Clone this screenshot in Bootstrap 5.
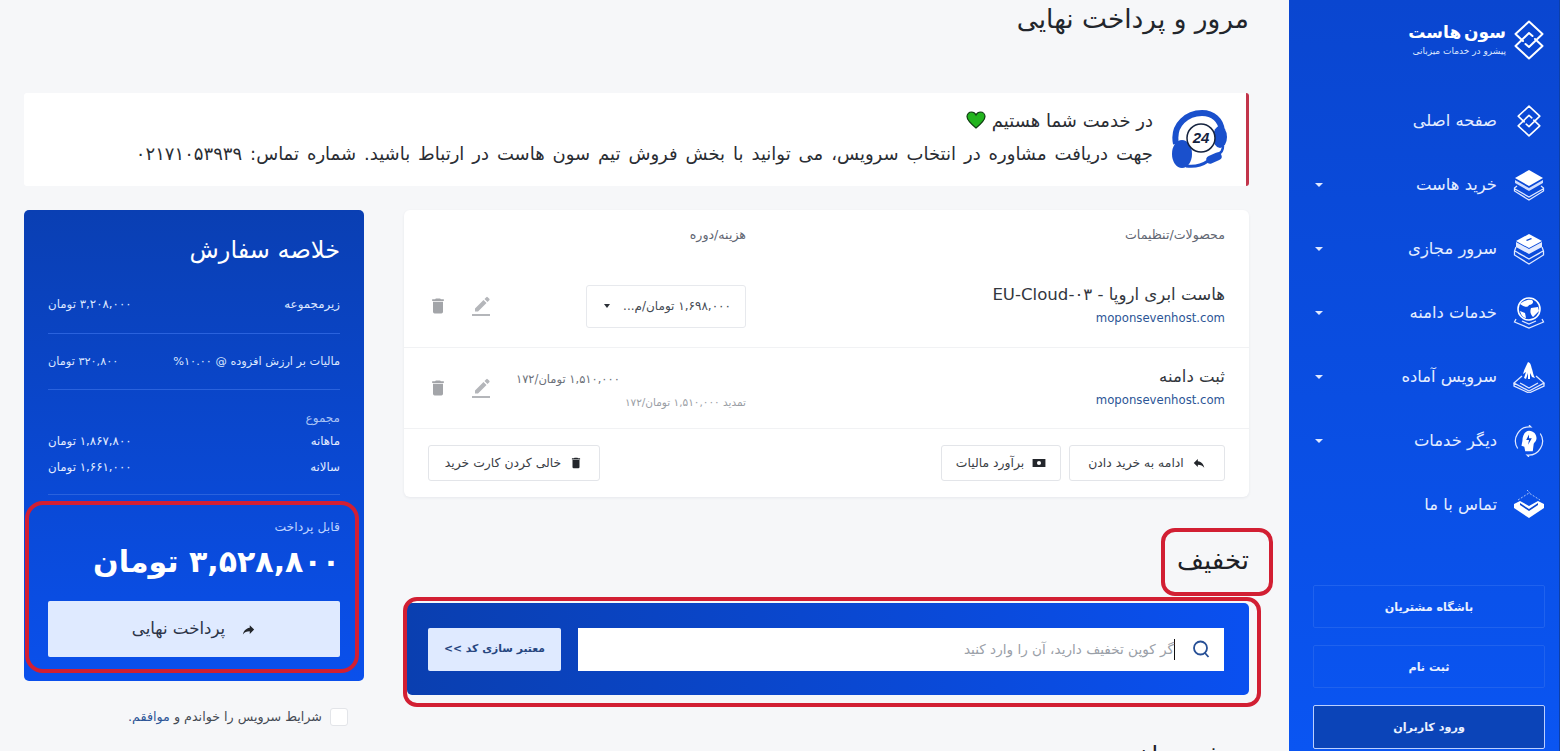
<!DOCTYPE html>
<html lang="fa" dir="rtl">
<head>
  <meta charset="UTF-8">
  <title>مرور و پرداخت نهایی</title>
  <meta name="viewport" content="width=device-width, initial-scale=1">
  <link rel="stylesheet" href="https://cdn.jsdelivr.net/npm/bootstrap@5.3.0/dist/css/bootstrap.min.css">
  <style>
    html, body { height: 100%; overflow: hidden; }
    body { font-family: "DejaVu Sans", "Noto Sans", sans-serif; background: #f6f7f9; color: #2b2f36; font-size: 12px; }
    .shell { height: 751px; }
    /* sidebar */
    .side { width: 271px; flex: none; background: linear-gradient(180deg, #0a46d0 0%, #0a55f2 100%); border-right: 1px solid #0d3fa8; color: #e4edff; padding: 0 14px 0 24px; height: 751px; }
    .brand { height: 80px; }
    .brand-copy { margin-right: 7px; }
    .brand-name { font-size: 17px; font-weight: 700; color: #fff; line-height: 20px; word-spacing: -3px; white-space: nowrap; }
    .brand-sub { font-size: 9px; color: #dfe8ff; line-height: 14px; margin-top: 2px; white-space: nowrap; }
    .side-menu { margin-top: 9px; height: 448px; }
    .side-item { height: 64px; color: #e4edff; text-decoration: none; font-size: 16.4px; font-weight: 500; }
    .side-ico { width: 32px; height: 32px; flex: none; margin-left: 16px; }
    .side-caret { margin-right: auto; margin-left: 2px; width: 0; height: 0; border-left: 4px solid transparent; border-right: 4px solid transparent; border-top: 4px solid #dfe8ff; }
    .side-btns { margin-top: 48px; gap: 17px; }
    .side-btn { height: 43px; border: 1px solid #1f62ee; color: #eaf1ff; font-size: 11.2px; font-weight: 700; border-radius: 2px; padding-top: 3px; }
    .side-btn-on { height: 44px; background: #0b44b8; border-color: #bcd0ff; }
    /* main */
    .main-pane { padding: 0 40px 0 24px; min-width: 0; }
    .page-title { font-size: 26.4px; font-weight: 400; color: #22262c; height: 93px; margin: 0; padding-top: 2px; line-height: 34px; }
    .help-box { height: 93px; background: #fff; border-right: 3px solid #c2344a; border-radius: 3px; padding-right: 18px; }
    .help-text { margin-right: 17px; font-size: 18px; line-height: 33px; color: #2a2d33; padding-bottom: 6px; }
    .help-first { height: 33px; }
    .help-second { word-spacing: 2.2px; white-space: nowrap; }
    .heart { vertical-align: -2px; }
    .page-row { margin-top: 24px; gap: 40px; }
    /* cart */
    .cart-col { width: 845px; flex: none; }
    .cart-box { height: 287px; border: 0; border-radius: 6px; box-shadow: 0 1px 3px rgba(30,40,70,.07); }
    .cart-line { padding: 0 24px; }
    .cart-head { height: 55px; font-size: 12.6px; color: #5f6672; padding-bottom: 4px; }
    .cell-prod { width: 479px; flex: none; }
    .cell-price { width: 230px; flex: none; }
    .cart-row { border-bottom: 1px solid #f1f2f4; }
    .cart-row-a { height: 83px; }
    .cart-row-b { height: 81px; }
    .prod-name { font-size: 16.6px; color: #33373e; line-height: 24px; margin-top: -3px; margin-bottom: 2px; }
    .prod-dom { font-size: 11.7px; color: #2c5596; line-height: 18px; }
    .cycle-box { width: 160px; height: 43px; border: 1px solid #e7e9ed; border-radius: 3px; font-size: 12px; color: #444a53; padding: 0 14px 0 17px; }
    .cycle-caret { width: 0; height: 0; border-left: 3.5px solid transparent; border-right: 3.5px solid transparent; border-top: 4px solid #2b2f36; }
    .price-a { font-size: 11.5px; color: #6b7079; text-align: left; line-height: 20px; white-space: nowrap; margin-top: 2px; }
    .price-b { font-size: 10.5px; color: #9a9ea5; line-height: 16px; margin-top: 5px; white-space: nowrap; }
    .row-acts { gap: 21px; }
    .foot-line { height: 68px; padding: 0 24px; }
    .plain-btn { height: 36px; background: #fff; border: 1px solid #e3e5e9; border-radius: 3px; font-size: 12.4px; color: #3a3e45; padding: 0; white-space: nowrap; }
    .btn-shop { width: 156px; }
    .btn-tax { width: 120px; }
    .btn-empty { width: 172px; }
    /* discount */
    .disc-title { position: relative; font-size: 26px; font-weight: 400; color: #1d2025; height: 106px; padding-top: 46px; line-height: 34px; margin: 0; }
    .mark-red { position: absolute; border: 4px solid #d21f33; border-radius: 14px; pointer-events: none; }
    .mark-title { top: 31px; right: -24px; width: 112px; height: 68px; }
    .disc-wrap { position: relative; }
    .disc-band { height: 92px; margin-right: 0; margin-left: 3px; border-radius: 5px; background: linear-gradient(90deg, #0a3fb0 0%, #0a50f0 100%); padding: 0 25px 0 21px; }
    .mark-disc { top: -6px; right: -12px; width: 858px; height: 110px; }
    .disc-input { width: 646px; height: 43px; background: #fff; flex: none; color: #9aa0a8; font-size: 13.6px; padding-right: 14px; }
    .disc-caret { width: 1px; height: 21px; background: #111; margin: 0 17px 0 0; }
    .disc-btn { width: 133px; height: 43px; padding: 0; background: #dfeaff; border: 0; border-radius: 2px; color: #26467f; font-size: 10.8px; font-weight: 700; }
    .peek-title { font-size: 24px; color: #1d2025; line-height: 30px; margin-top: 45px; }
    /* summary */
    .sum-col { width: 340px; flex: none; }
    .sum-box { position: relative; height: 471px; border: 0; border-radius: 5px; color: #d9e5ff; background: linear-gradient(180deg, #0a3fb3 0%, #0a50ec 100%); padding: 0 24px; }
    .sum-title { font-size: 24px; font-weight: 400; color: #fff; margin: 0; height: 70px; padding-top: 24px; line-height: 32px; }
    .sum-line { font-size: 11.8px; height: 54px; padding-top: 14px; line-height: 20px; border-bottom: 1px solid #2a62dd; color: #dce7ff; }
    .sum-line-b { height: 56px; padding-top: 18px; font-size: 11.3px; }
    .sum-cap { font-size: 12px; color: #a9c3f5; margin-top: 18px; line-height: 20px; }
    .sum-sub { font-size: 11.8px; line-height: 26px; color: #e3ecff; }
    .sum-end { border-top: 1px solid #2a62dd; margin-top: 14px; padding-top: 22px; }
    .pay-cap { font-size: 12.4px; color: #bcd2ff; line-height: 20px; }
    .pay-sum { font-size: 30px; font-weight: 700; color: #fff; line-height: 44px; margin-top: 3px; white-space: nowrap; }
    .pay-btn { width: 100%; height: 56px; margin-top: 17px; background: #dfeaff; border: 0; border-radius: 2px; color: #2b3447; font-size: 16.6px; padding: 0; }
    .mark-sum { top: 291px; right: 5px; left: 1px; height: 172px; border-radius: 18px; }
    .terms { margin-top: 26px; font-size: 12.7px; color: #444a53; padding-right: 16px; }
    .terms-box { width: 18px; height: 18px; background: #fff; border: 1px solid #e3e5e9; border-radius: 3px; flex: none; }
    .terms a { color: #2c5596; text-decoration: none; }
  </style>
</head>
<body>
  <svg width="0" height="0" class="d-none">
    <symbol id="ico-logo" viewBox="0 0 32 40">
      <path d="M10 21 2.500 14 16 1.500 29.500 14 16 27 12.500 24M22 19 29.500 26 16 38.500 2.500 26 16 13 19.500 16" fill="none" stroke="currentColor" stroke-width="2" stroke-linejoin="round" stroke-linecap="round"/>
    </symbol>
    <symbol id="ico-stack" viewBox="0 0 32 32">
      <path d="M16 1 30 9 16 17 2 9Z" fill="#fff"/>
      <path d="M2 11v3l14 8 14-8v-3L16 19Z" fill="#cfdcff"/>
      <path d="M4 17 1.500 19v3L16 31l14.500-9v-3L28 17M2 20l14 8 14-8" fill="none" stroke="#dfe8ff" stroke-width="1.300"/>
    </symbol>
    <symbol id="ico-server" viewBox="0 0 32 32">
      <path d="M16 1 29 8 16 15 3 8Z" fill="#fff"/>
      <path d="M13 7l5-2 1 1-5 2Z" fill="#0a46d0"/>
      <path d="M3 9v5l13 7 13-7V9l-13 7Z" fill="#e2eaff"/>
      <path d="M3 14 1.500 18v4L16 31l14.500-9v-4L29 14M2 18l14 8 14-8M5 20l11 6M27 20l-11 6" fill="none" stroke="#dfe8ff" stroke-width="1.300"/>
    </symbol>
    <symbol id="ico-globe" viewBox="0 0 32 32">
      <circle cx="16" cy="12" r="11" fill="none" stroke="#fff" stroke-width="1.600"/>
      <path d="M7 7c4-3 7-5 12-4 3 3-1 5-3 5-1 3-5 2-9-1ZM18 11l7-1 1 4-6 6c-3-3-3-6-2-9ZM7 14l5 2 1 5c-3 0-5-3-6-7Z" fill="#fff"/>
      <path d="M3 22 1.500 25 16 31l14.500-6L29 22M9 24l7 3 7-3" fill="none" stroke="#dfe8ff" stroke-width="1.300"/>
    </symbol>
    <symbol id="ico-hand" viewBox="0 0 32 32">
      <path d="M15 1c3 1 3 4 4 7 1 3 1 6 3 9l-3-1-2-4v6h-2v-6l-2 6-2-1 2-6-3 2c1-4 3-8 5-12Z" fill="#fff"/>
      <path d="M9 15 1 22l15 8 15-8-8-7M1 22v3l15 7 15-7v-3M7 22l9 5 9-5" fill="none" stroke="#dfe8ff" stroke-width="1.300"/>
    </symbol>
    <symbol id="ico-head" viewBox="0 0 34 34">
      <path d="M5 25A15 15 0 0 1 19 2l-2-2M29 9a15 15 0 0 1-14 23l2 2" fill="none" stroke="#dfe8ff" stroke-width="1.300"/>
      <path d="M17 6c5 0 8 4 8 8 0 3-2 4-3 6l-1 8h-8l-1-5-3-1 1-5c0-6 3-11 7-11Z" fill="#fff"/>
      <path d="M17 10l-3 6h3l-1 5 4-7h-3Z" fill="#0a46d0"/>
    </symbol>
    <symbol id="ico-box" viewBox="0 0 32 32">
      <path d="M1 15l6-3 9 5 9-5 6 3v4L16 29 1 19Z" fill="#fff"/>
      <path d="M16 20 7 14v2l9 6 9-6v-2Z" fill="#0a46d0"/>
      <path d="M5 11 16 4l11 7M14 1l3 3" fill="none" stroke="#a9c3f5" stroke-width="1" stroke-dasharray="2 1.500"/>
    </symbol>
    <symbol id="ico-trash" viewBox="0 0 24 24"><path d="M6 19a2 2 0 0 0 2 2h8a2 2 0 0 0 2-2V7H6ZM19 4h-3.500l-1-1h-5l-1 1H5v2h14Z"/></symbol>
    <symbol id="ico-edit" viewBox="0 0 24 24"><path d="M3 20h18v2H3ZM6 14.500l8.500-8.500 3 3L9 17.500H6ZM15.500 5l1.800-1.800a1 1 0 0 1 1.400 0l1.600 1.600a1 1 0 0 1 0 1.400L18.500 8Z"/></symbol>
    <symbol id="ico-reply" viewBox="0 0 24 24"><path d="M10 9V5l-7 7 7 7v-4.100c5 0 8.500 1.600 11 5.100-1-5-4-10-11-11Z"/></symbol>
    <symbol id="ico-share" viewBox="0 0 24 24"><path d="M14 9V5l7 7-7 7v-4.100c-5 0-8.500 1.600-11 5.100 1-5 4-10 11-11Z"/></symbol>
    <symbol id="ico-money" viewBox="0 0 24 24"><path fill-rule="evenodd" d="M1 5h22v14H1ZM12 8.500a3.500 3.500 0 1 0 0 7 3.500 3.500 0 0 0 0-7Z"/></symbol>
  </svg>

  <div class="shell d-flex">
    <!-- sidebar -->
    <aside class="side d-flex flex-column">
      <div class="brand d-flex align-items-center">
        <svg class="text-white flex-shrink-0" width="32" height="40"><use href="#ico-logo"/></svg>
        <div class="brand-copy">
          <div class="brand-name">سون هاست</div>
          <div class="brand-sub">پیشرو در خدمات میزبانی</div>
        </div>
      </div>
      <nav class="side-menu d-flex flex-column">
        <a class="side-item d-flex align-items-center" href="#"><svg class="side-ico text-white"><use href="#ico-logo"/></svg>صفحه اصلی</a>
        <a class="side-item d-flex align-items-center" href="#"><svg class="side-ico"><use href="#ico-stack"/></svg>خرید هاست<span class="side-caret"></span></a>
        <a class="side-item d-flex align-items-center" href="#"><svg class="side-ico"><use href="#ico-server"/></svg>سرور مجازی<span class="side-caret"></span></a>
        <a class="side-item d-flex align-items-center" href="#"><svg class="side-ico"><use href="#ico-globe"/></svg>خدمات دامنه<span class="side-caret"></span></a>
        <a class="side-item d-flex align-items-center" href="#"><svg class="side-ico"><use href="#ico-hand"/></svg>سرویس آماده<span class="side-caret"></span></a>
        <a class="side-item d-flex align-items-center" href="#"><svg class="side-ico"><use href="#ico-head"/></svg>دیگر خدمات<span class="side-caret"></span></a>
        <a class="side-item d-flex align-items-center" href="#"><svg class="side-ico"><use href="#ico-box"/></svg>تماس با ما</a>
      </nav>
      <div class="side-btns d-flex flex-column">
        <div class="side-btn d-flex align-items-center justify-content-center">باشگاه مشتریان</div>
        <div class="side-btn d-flex align-items-center justify-content-center">ثبت نام</div>
        <div class="side-btn side-btn-on d-flex align-items-center justify-content-center">ورود کاربران</div>
      </div>
    </aside>

    <!-- main -->
    <main class="main-pane flex-grow-1">
      <h1 class="page-title">مرور و پرداخت نهایی</h1>

      <div class="help-box d-flex align-items-center">
        <svg class="flex-shrink-0" width="58" height="60" viewBox="0 0 58 60">
          <path d="M6 34C2 14 18 3 32 3c11 0 19 7 20 18" fill="none" stroke="#1a50cc" stroke-width="6"/>
          <ellipse cx="12" cy="44" rx="10" ry="14" fill="#1a50cc"/>
          <ellipse cx="50" cy="27" rx="7" ry="11" fill="#1a50cc"/>
          <circle cx="31" cy="28" r="14" fill="#fff" stroke="#15233f" stroke-width="1.500"/>
          <text x="31" y="33" text-anchor="middle" font-family="Liberation Sans, sans-serif" font-size="15" font-weight="700" font-style="italic" fill="#15233f">24</text>
          <rect x="36" y="44" width="16" height="8" rx="4" transform="rotate(-24 44 48)" fill="#1a50cc"/>
          <path d="M16 56c7 1 15 0 22-5" fill="none" stroke="#1a50cc" stroke-width="3"/>
          <path d="M53 36c0 4-2 7-5 8" fill="none" stroke="#1a50cc" stroke-width="2.500"/>
        </svg>
        <div class="help-text">
          <div class="help-first">در خدمت شما هستیم
            <svg class="heart" width="20" height="18" viewBox="0 0 20 18"><path d="M10 17C4 12 1 9 1 5.500 1 3 3 1 5.500 1 7.500 1 9 2 10 4c1-2 2.500-3 4.500-3C17 1 19 3 19 5.500 19 9 16 12 10 17Z" fill="#22b41e" stroke="#0e3d12" stroke-width="1.200"/></svg>
          </div>
          <div class="help-second">جهت دریافت مشاوره در انتخاب سرویس، می توانید با بخش فروش تیم سون هاست در ارتباط باشید. شماره تماس: ۰۲۱۷۱۰۵۳۹۳۹</div>
        </div>
      </div>

      <div class="page-row d-flex">
        <!-- cart -->
        <div class="cart-col">
          <div class="card cart-box">
            <div class="cart-line cart-head d-flex align-items-center">
              <div class="cell-prod">محصولات/تنظیمات</div>
              <div class="cell-price">هزینه/دوره</div>
            </div>
            <div class="cart-line cart-row cart-row-a d-flex align-items-center">
              <div class="cell-prod">
                <div class="prod-name">هاست ابری اروپا - EU-Cloud-۰۳</div>
                <div class="prod-dom">moponsevenhost.com</div>
              </div>
              <div class="cell-price">
                <div class="cycle-box d-flex align-items-center justify-content-between">
                  <span>۱,۶۹۸,۰۰۰ تومان/م...</span><span class="cycle-caret"></span>
                </div>
              </div>
              <div class="row-acts d-flex flex-grow-1 justify-content-end align-items-center">
                <svg width="24" height="24" fill="#b4b6ba"><use href="#ico-edit"/></svg>
                <svg width="20" height="24" fill="#a3a5a9"><use href="#ico-trash"/></svg>
              </div>
            </div>
            <div class="cart-line cart-row cart-row-b d-flex align-items-center">
              <div class="cell-prod">
                <div class="prod-name">ثبت دامنه</div>
                <div class="prod-dom">moponsevenhost.com</div>
              </div>
              <div class="cell-price">
                <div class="price-a">۱,۵۱۰,۰۰۰ تومان/۱۷۲</div>
                <div class="price-b">تمدید ۱,۵۱۰,۰۰۰ تومان/۱۷۲</div>
              </div>
              <div class="row-acts d-flex flex-grow-1 justify-content-end align-items-center">
                <svg width="24" height="24" fill="#b4b6ba"><use href="#ico-edit"/></svg>
                <svg width="20" height="24" fill="#a3a5a9"><use href="#ico-trash"/></svg>
              </div>
            </div>
            <div class="foot-line d-flex align-items-center">
              <button type="button" class="btn plain-btn btn-shop d-flex align-items-center justify-content-center gap-2"><svg width="14" height="14" fill="#23262b"><use href="#ico-reply"/></svg>ادامه به خرید دادن</button>
              <button type="button" class="btn plain-btn btn-tax d-flex align-items-center justify-content-center gap-2 me-2"><svg width="14" height="14" fill="#23262b"><use href="#ico-money"/></svg>برآورد مالیات</button>
              <button type="button" class="btn plain-btn btn-empty d-flex align-items-center justify-content-center gap-2 me-auto"><svg width="14" height="14" fill="#23262b"><use href="#ico-trash"/></svg>خالی کردن کارت خرید</button>
            </div>
          </div>

          <h2 class="disc-title">تخفیف<span class="mark-red mark-title"></span></h2>
          <div class="disc-wrap">
            <div class="disc-band d-flex align-items-center justify-content-between">
              <div class="disc-input d-flex align-items-center">
                <svg width="18" height="18" viewBox="0 0 18 18" fill="none" stroke="#264f96" stroke-width="1.800"><circle cx="8.500" cy="8" r="6.500"/><path d="M13 13l3.500 4"/></svg>
                <span class="disc-caret"></span>
                <span>گر کوپن تخفیف دارید، آن را وارد کنید</span>
              </div>
              <button type="button" class="btn disc-btn">معتبر سازی کد &gt;&gt;</button>
            </div>
            <span class="mark-red mark-disc"></span>
          </div>
          <div class="peek-title">روش پرداخت</div>
        </div>

        <!-- summary -->
        <div class="sum-col">
          <div class="card sum-box">
            <h2 class="sum-title">خلاصه سفارش</h2>
            <div class="sum-line d-flex justify-content-between"><span>زیرمجموعه</span><span>۳,۲۰۸,۰۰۰ تومان</span></div>
            <div class="sum-line sum-line-b d-flex justify-content-between"><span>مالیات بر ارزش افزوده @ ۱۰.۰۰%</span><span>۳۲۰,۸۰۰ تومان</span></div>
            <div class="sum-cap">مجموع</div>
            <div class="sum-sub d-flex justify-content-between"><span>ماهانه</span><span>۱,۸۶۷,۸۰۰ تومان</span></div>
            <div class="sum-sub d-flex justify-content-between"><span>سالانه</span><span>۱,۶۶۱,۰۰۰ تومان</span></div>
            <div class="sum-end">
              <div class="pay-cap">قابل پرداخت</div>
              <div class="pay-sum">۳,۵۲۸,۸۰۰ تومان</div>
              <button type="button" class="btn pay-btn d-flex align-items-center justify-content-center gap-3"><svg width="15" height="15" fill="#23262b"><use href="#ico-share"/></svg>پرداخت نهایی</button>
            </div>
            <span class="mark-red mark-sum"></span>
          </div>
          <div class="terms d-flex align-items-center gap-2">
            <span class="terms-box"></span>
            <span>شرایط سرویس را خواندم و <a href="#">موافقم.</a></span>
          </div>
        </div>
      </div>
    </main>
  </div>
  <script src="https://cdn.jsdelivr.net/npm/bootstrap@5.3.0/dist/js/bootstrap.bundle.min.js"></script>
</body>
</html>
